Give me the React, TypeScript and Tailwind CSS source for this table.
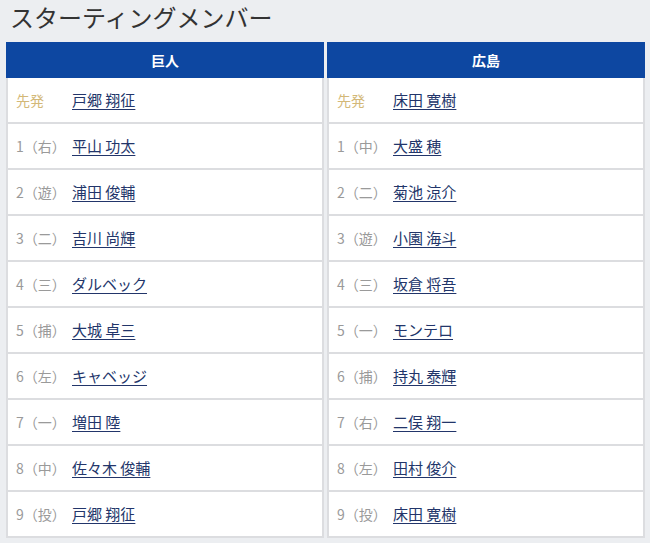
type Entry = { pos: string; name: string };

const giants: Entry[] = [
  { pos: "先発", name: "戸郷 翔征" },
  { pos: "1（右）", name: "平山 功太" },
  { pos: "2（遊）", name: "浦田 俊輔" },
  { pos: "3（二）", name: "吉川 尚輝" },
  { pos: "4（三）", name: "ダルベック" },
  { pos: "5（捕）", name: "大城 卓三" },
  { pos: "6（左）", name: "キャベッジ" },
  { pos: "7（一）", name: "増田 陸" },
  { pos: "8（中）", name: "佐々木 俊輔" },
  { pos: "9（投）", name: "戸郷 翔征" },
];

const carp: Entry[] = [
  { pos: "先発", name: "床田 寛樹" },
  { pos: "1（中）", name: "大盛 穂" },
  { pos: "2（二）", name: "菊池 涼介" },
  { pos: "3（遊）", name: "小園 海斗" },
  { pos: "4（三）", name: "坂倉 将吾" },
  { pos: "5（一）", name: "モンテロ" },
  { pos: "6（捕）", name: "持丸 泰輝" },
  { pos: "7（右）", name: "二俣 翔一" },
  { pos: "8（左）", name: "田村 俊介" },
  { pos: "9（投）", name: "床田 寛樹" },
];

function TeamColumn({ team, members }: { team: string; members: Entry[] }) {
  return (
    <div className="flex flex-col">
      <div className="flex h-[36px] items-center justify-center bg-[#0d47a1] text-[14px] font-bold text-white">
        {team}
      </div>
      {members.map((m) => (
        <div
          key={m.pos}
          className="flex h-[46px] items-center border-x-2 border-b-2 border-[#dcdde0] bg-white pl-[8px]"
        >
          <span
            className={
              m.pos === "先発"
                ? "w-[56px] text-[14px] text-[#d3b878]"
                : "w-[56px] text-[14px] text-[#9a9a9a]"
            }
          >
            {m.pos}
          </span>
          <span className="text-[15px] text-[#22356a] underline decoration-1 underline-offset-[3px]">
            {m.name}
          </span>
        </div>
      ))}
    </div>
  );
}

export default function App() {
  return (
    <div
      className="h-[543px] w-[650px] overflow-hidden bg-[#eceef1]"
      style={{ fontFamily: '"Noto Sans CJK JP", "Noto Sans", sans-serif' }}
    >
      <h1 className="h-[42px] pl-[10px] pt-[1px] text-[24px] font-normal leading-[32px] text-[#333]">
        スターティングメンバー
      </h1>
      <div className="grid grid-cols-2 gap-x-[3px] pl-[6px] pr-[5px]">
        <TeamColumn team="巨人" members={giants} />
        <TeamColumn team="広島" members={carp} />
      </div>
    </div>
  );
}
